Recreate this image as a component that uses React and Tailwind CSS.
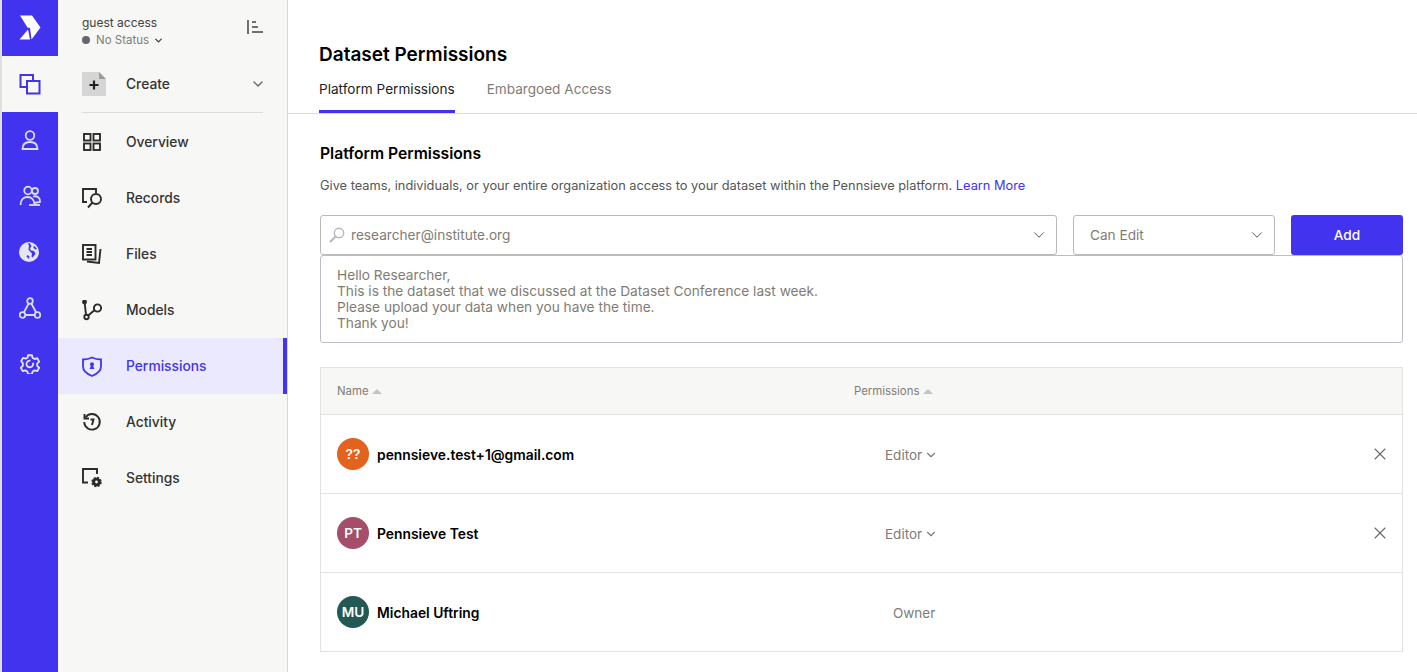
import { ChevronDown, X } from 'lucide-react'

function Logo() {
  return (
    <svg width="22" height="26" viewBox="0 0 22 26" fill="#fff">
      <path d="M1 .5h12l8.500 12-9 12L11 13l-2.500-.5z" />
      <path d="M.5 24.500L9 14.500l2 10z" />
    </svg>
  )
}

const railIcons = {
  datasets: (
    <>
      <path d="M7 14H1.500V2H14v5.500" strokeWidth="2" />
      <rect x="8" y="8" width="12.500" height="12.500" strokeWidth="2" />
    </>
  ),
  person: (
    <>
      <circle cx="11" cy="6.500" r="4.300" />
      <path d="M3.500 20c0-4.500 3-7 7.500-7s7.500 2.500 7.500 7z" />
    </>
  ),
  people: (
    <>
      <circle cx="9" cy="5.500" r="3.800" />
      <circle cx="16" cy="6" r="3" />
      <path d="M1.500 20c0-5 3-8 7-8s7 3 7 8" />
      <path d="M14 11.500c4-1 7 1 7 4.500v1l-6 1" />
      <path d="M10 20h11" />
    </>
  ),
  model: (
    <>
      <circle cx="11" cy="4" r="2.800" />
      <circle cx="3.500" cy="18" r="2.800" />
      <circle cx="18.500" cy="18" r="2.800" />
      <path d="M9.700 6.500L4.800 15.500M12.300 6.500l4.900 9M6.300 18h9.400" />
    </>
  ),
}

function RailIcon({ name, color = '#dcdcf0' }) {
  return (
    <svg width="22" height="22" viewBox="0 0 22 22" fill="none" stroke={color} strokeWidth="1.800">
      {railIcons[name]}
    </svg>
  )
}

function GlobeIcon() {
  return (
    <svg width="20" height="20" viewBox="0 0 20 20" className="mr-[2px]">
      <circle cx="10" cy="10" r="10" fill="#e4e4f2" />
      <path d="M10.500 1l2 3-1.500 2.500 1 2 3 .5 1.500 3-3 3.500-1-1 .5-3-2-2-1.500-2 .5-3.500-1-2.500z" fill="#4133ee" />
      <path d="M15 3.500l3 3.500-2 .5-1.500-2z" fill="#4133ee" />
      <path d="M10 17l-2.500-2.500 1-1.500 2 1.500z" fill="#4133ee" />
    </svg>
  )
}

function GearIcon() {
  return (
    <svg width="20" height="20" viewBox="0 0 24 24" fill="none" stroke="#e4e4f2" strokeWidth="2.200" strokeLinejoin="round">
      <path d="M9.600 1.500h4.800l.8 3.200 2.300 1.300 3.200-.9 2.300 4.100-2.400 2.300v2.700l2.400 2.300-2.300 4.100-3.200-.9-2.300 1.300-.8 3.200H9.600l-.8-3.200-2.300-1.300-3.200.9-2.300-4.100 2.400-2.300V11L1.400 8.700l2.300-4.100 3.200.9 2.300-1.300z" />
      <path d="M15.500 10.500a4 4 0 1 1-3-2.500" />
    </svg>
  )
}

function Rail() {
  return (
    <div className="flex w-[58px] shrink-0 flex-col border-l-2 border-[#e0e0e0] bg-[#4133ee]">
      <div className="flex h-14 items-center justify-center pr-[1px]">
        <Logo />
      </div>
      <div className="flex h-14 items-center justify-center bg-[#f7f7f5]">
        <RailIcon name="datasets" color="#4133ee" />
      </div>
      <div className="flex h-14 items-center justify-center">
        <RailIcon name="person" />
      </div>
      <div className="flex h-14 items-center justify-center">
        <RailIcon name="people" />
      </div>
      <div className="flex h-14 items-center justify-center">
        <GlobeIcon />
      </div>
      <div className="flex h-14 items-center justify-center">
        <RailIcon name="model" />
      </div>
      <div className="flex h-14 items-center justify-center">
        <GearIcon />
      </div>
    </div>
  )
}

const navIcons = {
  overview: (
    <>
      <rect x="2" y="2" width="6.500" height="6.500" />
      <rect x="11.500" y="2" width="6.500" height="6.500" />
      <rect x="2" y="11.500" width="6.500" height="6.500" />
      <rect x="11.500" y="11.500" width="6.500" height="6.500" />
    </>
  ),
  records: (
    <>
      <path d="M5 14H1V1h13v4" />
      <circle cx="14" cy="11" r="5" />
      <path d="M10.500 14.500l-4.500 5" />
    </>
  ),
  files: (
    <>
      <rect x="1" y="1" width="12.500" height="14.500" />
      <path d="M4.500 5h5.500M4.500 8h5.500M4.500 11h5.500" />
      <path d="M18.500 5L17 19l-12-1.500" />
    </>
  ),
  models: (
    <>
      <circle cx="2.500" cy="2" r="1.500" fill="#2b2b2b" />
      <circle cx="4.500" cy="17" r="2.200" />
      <circle cx="15.500" cy="8" r="3.600" />
      <path d="M2.700 3l1.300 12M6.200 15.500l6.500-5.500" />
    </>
  ),
  permissions: (
    <>
      <path d="M10 1.500c3 1.500 6 2 9 2v7c0 4-4 7.500-9 9.500-5-2-9-5.500-9-9.500v-7c3 0 6-.5 9-2z" strokeWidth="1.800" />
      <circle cx="10" cy="8.200" r="2" fill="#4133ee" stroke="none" />
      <path d="M7.500 13l1.800-4h1.400l1.800 4z" fill="#4133ee" stroke="none" />
    </>
  ),
  activity: (
    <>
      <path d="M3.500 5.500a7.800 7.800 0 1 1-1.300 4.500" />
      <path d="M2.500 2v4.500H7" />
      <path d="M8.500 7.500h3L10 13" />
    </>
  ),
  settings: (
    <>
      <path d="M6 14.500H1V1h14v5" />
      <circle cx="14.500" cy="14" r="4.200" fill="#2b2b2b" stroke="#2b2b2b" strokeWidth="2" strokeDasharray="2 1.300" />
      <circle cx="14.500" cy="14" r="3.800" fill="#2b2b2b" stroke="none" />
      <circle cx="14.500" cy="14" r="1.400" fill="#f7f7f5" stroke="none" />
    </>
  ),
}

function NavItem({ icon, label, active }) {
  const color = active ? '#4133ee' : '#2b2b2b'
  return (
    <div className={`flex h-14 items-center pl-6 ${active ? 'border-r-4 border-[#4133ee] bg-[#ebe9fd]' : ''}`}>
      <svg width="20" height="21" viewBox="0 0 20 21" fill="none" stroke={color} strokeWidth="1.900">
        {navIcons[icon]}
      </svg>
      <span className={`ml-6 text-[13.8px] font-medium ${active ? 'text-[#4133ee]' : 'text-[#333]'}`}>{label}</span>
    </div>
  )
}

function Sidebar() {
  return (
    <div className="flex w-[230px] shrink-0 flex-col border-r border-[#d8d8d8] bg-[#f7f7f5]">
      <div className="flex h-14 items-start justify-between pt-[15px] pl-6 pr-[24px]">
        <div>
          <div className="text-xs leading-[16px] text-[#404040]">guest access</div>
          <div className="mt-[1px] flex items-center text-[11.5px] leading-[16px] text-[#7f7c75]">
            <span className="mr-[6px] h-2 w-2 shrink-0 rounded-full bg-[#66666e]" />
            No Status
            <ChevronDown size={11} strokeWidth={2.500} className="ml-[4px] text-[#333]" />
          </div>
        </div>
        <svg width="16" height="14" viewBox="0 0 16 14" stroke="#444" strokeWidth="1.500" className="mt-[5px]">
          <path d="M1 0v14M5 2h4M5 7h6M5 12h11" />
        </svg>
      </div>
      <div className="flex h-14 items-center pl-6 pr-6">
        <svg width="24" height="24" viewBox="0 0 24 24">
          <path d="M0 0h17l7 7v17H0z" fill="#d5d5d5" />
          <path d="M17 0l7 7h-7z" fill="#9a9a9f" />
          <path d="M12 8.500v9M7.500 13h9" stroke="#222" strokeWidth="2.200" />
        </svg>
        <span className="ml-5 text-[13.8px] font-medium text-[#333]">Create</span>
        <ChevronDown size={16} strokeWidth={2} className="ml-auto mr-[-3px] text-[#66666e]" />
      </div>
      <div className="mx-6 h-[1px] bg-[#dcdcda]" />
      <div className="h-[1px]" />
      <NavItem icon="overview" label="Overview" />
      <NavItem icon="records" label="Records" />
      <NavItem icon="files" label="Files" />
      <NavItem icon="models" label="Models" />
      <NavItem icon="permissions" label="Permissions" active />
      <NavItem icon="activity" label="Activity" />
      <NavItem icon="settings" label="Settings" />
    </div>
  )
}

function Member({ initials, bg, name, role, removable }) {
  return (
    <div className="flex h-[79px] items-center border-b border-[#e2e2e0] pl-4">
      <div className={`flex h-8 w-8 items-center justify-center rounded-full text-[13.6px] font-semibold text-white ${bg}`}>
        {initials}
      </div>
      <span className="ml-2 w-[508px] pt-[2px] text-[13.85px] font-semibold text-black">{name}</span>
      {removable ? (
        <div className="flex items-center pt-[2px] text-[13.5px] text-[#7f7c75]">
          {role}
          <ChevronDown size={14} strokeWidth={2} className="ml-[2px]" />
        </div>
      ) : (
        <span className="ml-2 pt-[2px] text-[13.5px] text-[#7f7c75]">{role}</span>
      )}
      {removable && <X size={20} strokeWidth={1.300} className="ml-auto mr-3 text-[#66666e]" />}
    </div>
  )
}

export default function App() {
  return (
    <div className="flex h-[672px] overflow-hidden bg-white font-['Inter',sans-serif]">
      <Rail />
      <Sidebar />
      <main className="min-w-0 flex-1">
        <div className="border-b border-[#dcdcdc] pt-[44px] pl-[31px]">
          <h1 className="text-[19px] leading-[22px] font-semibold text-black">Dataset Permissions</h1>
          <div className="mt-[11px] flex gap-8">
            <div className="h-[36px] border-b-[3px] border-[#4133ee] pt-[2px] text-[13.6px] leading-[20px] text-[#222]">
              Platform Permissions
            </div>
            <div className="pt-[2px] text-[13.6px] leading-[20px] text-[#7f7c75]">Embargoed Access</div>
          </div>
        </div>
        <div className="pt-[29px] pl-[32px] pr-[14px]">
          <h2 className="text-[15.7px] leading-[22px] font-semibold text-black">Platform Permissions</h2>
          <p className="mt-[11px] text-[12.8px] leading-[20px] text-[#555]">
            Give teams, individuals, or your entire organization access to your dataset within the Pennsieve platform.{' '}
            <span className="text-[#4133ee]">Learn More</span>
          </p>
          <div className="mt-[19px] flex gap-4">
            <div className="flex h-10 flex-1 items-center rounded-[3px] border border-[#bcbab6] pl-2 pr-3 text-[13.65px] text-[#7f7c75]">
              <svg width="16" height="16" viewBox="0 0 16 16" fill="none" stroke="#b4b4c0" strokeWidth="1.400">
                <circle cx="10" cy="6" r="4.700" />
                <path d="M6.500 9.500L1 15" strokeWidth="1.800" />
              </svg>
              <span className="ml-[6px]">researcher@institute.org</span>
              <ChevronDown size={18} strokeWidth={1.300} className="ml-auto mr-[-4px] text-[#555]" />
            </div>
            <div className="flex h-10 w-[202px] items-center rounded-[3px] border border-[#bcbab6] pl-4 pr-[10px] text-[13.65px] text-[#7f7c75]">
              Can Edit
              <ChevronDown size={18} strokeWidth={1.300} className="ml-auto mr-[-2px] text-[#555]" />
            </div>
            <div className="flex h-10 w-[112px] items-center justify-center rounded-[3px] bg-[#4133ee] text-[13.65px] font-medium text-white">
              Add
            </div>
          </div>
          <div className="h-[88px] rounded-[3px] border border-[#bdbbc6] pt-[11px] pl-4 text-[13.7px] leading-[16px] text-[#7f7c75]">
            <p>Hello Researcher,</p>
            <p>This is the dataset that we discussed at the Dataset Conference last week.</p>
            <p>Please upload your data when you have the time.</p>
            <p>Thank you!</p>
          </div>
          <div className="mt-6 border border-b-0 border-[#e2e2e0]">
            <div className="flex h-[47px] items-center border-b border-[#e2e2e0] bg-[#f7f7f5] pt-[2px] pl-4 text-[11.4px] text-[#7f7c75]">
              <div className="flex w-[517px] items-center">
                Name
                <span className="ml-[3px] h-0 w-0 border-x-[5px] border-b-[5px] border-x-transparent border-b-[#c4c4c2]" />
              </div>
              <div className="flex items-center">
                Permissions
                <span className="ml-[4px] h-0 w-0 border-x-[5px] border-b-[5px] border-x-transparent border-b-[#c4c4c2]" />
              </div>
            </div>
            <Member initials="??" bg="bg-[#e2621f]" name="pennsieve.test+1@gmail.com" role="Editor" removable />
            <Member initials="PT" bg="bg-[#a54e69]" name="Pennsieve Test" role="Editor" removable />
            <Member initials="MU" bg="bg-[#245854]" name="Michael Uftring" role="Owner" />
          </div>
        </div>
      </main>
    </div>
  )
}
